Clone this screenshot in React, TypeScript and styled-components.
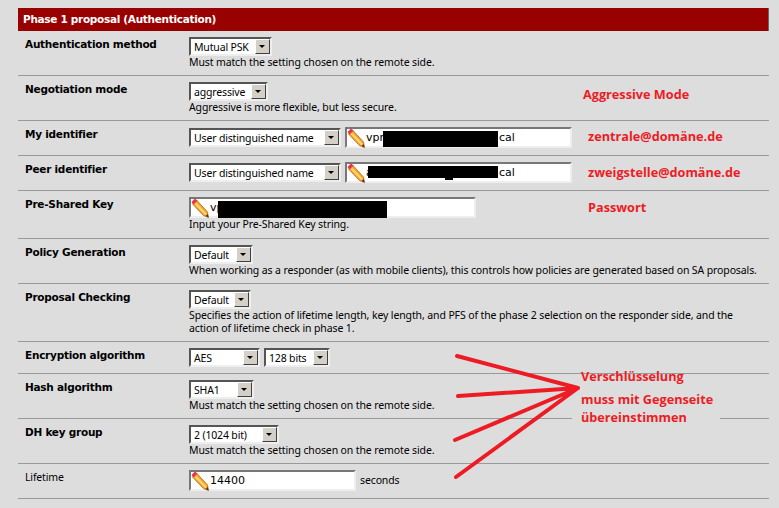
import React from "react";
import styled, { createGlobalStyle } from "styled-components";

const UI_FONT = `"Noto Sans", Tahoma, sans-serif`;
const BOLD_FONT = `"DejaVu Sans", Verdana, sans-serif`;

const GlobalStyle = createGlobalStyle`
  html, body {
    margin: 0;
    padding: 0;
    background: #dddddd;
    overflow: hidden;
  }
`;

const Pencil: React.FC = () => (
  <PencilIcon viewBox="0 0 18 20" aria-hidden="true">
    <path d="M1.5 6 L12.5 17.5 L17.5 19.5 L16.5 14 L5.5 2 Z" fill="#f5a623" stroke="#b5651d" strokeWidth="0.8" />
    <path d="M4.5 5.5 L15 16.5" stroke="#fbd77a" strokeWidth="2" />
    <path d="M0.5 4 L4 0.5 L6.5 2.5 L2.5 6.5 Z" fill="#e8344a" />
    <path d="M14.5 18 L17.5 19.5 L16.8 16 Z" fill="#5a3a1a" />
  </PencilIcon>
);

const Select: React.FC<{ value: string; width: number }> = ({ value, width }) => (
  <SelectBox $width={width}>
    <SelectValue>{value}</SelectValue>
    <SelectArrow />
  </SelectBox>
);

const Field: React.FC<{ width: number; value?: string; children?: React.ReactNode }> = ({ width, value, children }) => (
  <InputBox $width={width}>
    <Pencil />
    <InputValue>{value}</InputValue>
    {children}
  </InputBox>
);

const App: React.FC = () => (
  <Page>
    <GlobalStyle />
    <Panel>
      <Header>Phase 1 proposal (Authentication)</Header>

      <Row>
        <Label>Authentication method</Label>
        <Cell>
          <Select value="Mutual PSK" width={83} />
          <Note>Must match the setting chosen on the remote side.</Note>
        </Cell>
      </Row>
      <Row>
        <Label>Negotiation mode</Label>
        <Cell>
          <Select value="aggressive" width={79} />
          <Note>Aggressive is more flexible, but less secure.</Note>
        </Cell>
      </Row>
      <Row $tall>
        <Label>My identifier</Label>
        <Controls>
          <Select value="User distinguished name" width={152} />
          <Field width={227} value="vpr">
            <Redaction $left={36} $top={2} $width={115} $height={16} />
            <TrailingText>cal</TrailingText>
          </Field>
        </Controls>
      </Row>
      <Row $tall>
        <Label>Peer identifier</Label>
        <Controls>
          <Select value="User distinguished name" width={152} />
          <Field width={227} value="a">
            <Redaction $left={21} $top={2} $width={130} $height={12} />
            <Redaction $left={98} $top={14} $width={8} $height={2} />
            <TrailingText>cal</TrailingText>
          </Field>
        </Controls>
      </Row>
      <Row $tall>
        <Label>Pre-Shared Key</Label>
        <Cell>
          <Field width={287} value="vp">
            <Redaction $left={27} $top={2} $width={169} $height={17} />
          </Field>
          <Note>Input your Pre-Shared Key string.</Note>
        </Cell>
      </Row>
      <Row>
        <Label>Policy Generation</Label>
        <Cell>
          <Select value="Default" width={64} />
          <Note>When working as a responder (as with mobile clients), this controls how policies are generated based on SA proposals.</Note>
        </Cell>
      </Row>
      <Row>
        <Label>Proposal Checking</Label>
        <Cell>
          <Select value="Default" width={62} />
          <Note>Specifies the action of lifetime length, key length, and PFS of the phase 2 selection on the responder side, and the</Note>
          <Note>action of lifetime check in phase 1.</Note>
        </Cell>
      </Row>
      <Row>
        <Label>Encryption algorithm</Label>
        <Controls>
          <Select value="AES" width={71} />
          <Select value="128 bits" width={66} />
        </Controls>
      </Row>
      <Row>
        <Label>Hash algorithm</Label>
        <Cell>
          <Select value="SHA1" width={65} />
          <Note>Must match the setting chosen on the remote side.</Note>
        </Cell>
      </Row>
      <Row>
        <Label>DH key group</Label>
        <Cell>
          <Select value="2 (1024 bit)" width={90} />
          <Note>Must match the setting chosen on the remote side.</Note>
        </Cell>
      </Row>
      <Row $tall>
        <Label $plain>Lifetime</Label>
        <Controls>
          <Field width={167} value="14400" />
          <Note>seconds</Note>
        </Controls>
      </Row>
    </Panel>

    <Arrows viewBox="0 0 779 508" aria-hidden="true">
      <path d="M457 356 L578 388 M458 396 L578 388 M455 440 L578 388 M456 477 L578 388" />
    </Arrows>

    <Annotation $left={583} $top={86}>Aggressive Mode</Annotation>
    <Annotation $left={588} $top={128}>zentrale@domäne.de</Annotation>
    <Annotation $left={588} $top={164}>zweigstelle@domäne.de</Annotation>
    <Annotation $left={588} $top={199}>Passwort</Annotation>
    <Annotation $left={581} $top={368}>Verschlüsselung</Annotation>
    <Annotation $left={581} $top={391}>muss mit Gegenseite</Annotation>
    <Annotation $left={572} $top={409} $masked>übereinstimmen</Annotation>
  </Page>
);

export default App;

const Page = styled.div`
  position: relative;
  width: 779px;
  height: 508px;
  padding: 8px 10px 0 18px;
  box-sizing: border-box;
  background: #dddddd;
  color: #000000;
  font-family: ${UI_FONT};
  font-size: 10.5px;
  overflow: hidden;
`;

const Panel = styled.div`
  display: flex;
  flex-direction: column;
`;

const Header = styled.div`
  height: 23px;
  line-height: 23px;
  padding-left: 5px;
  background: #990000;
  border-right: 1px solid #666666;
  color: #ffffff;
  font-family: ${BOLD_FONT};
  font-weight: bold;
  font-size: 10.5px;
  letter-spacing: -0.3px;
`;

const Row = styled.div<{ $tall?: boolean }>`
  display: grid;
  grid-template-columns: 171px 1fr;
  padding: 6px 0 ${(p) => (p.$tall ? 7 : 6)}px;
  border-bottom: 1px solid #999999;
`;

const Label = styled.div<{ $plain?: boolean }>`
  padding-left: 7px;
  line-height: 14px;
  font-family: ${(p) => (p.$plain ? UI_FONT : BOLD_FONT)};
  font-weight: ${(p) => (p.$plain ? "normal" : "bold")};
  font-size: 10.5px;
  letter-spacing: ${(p) => (p.$plain ? -0.16 : -0.25)}px;
`;

const Cell = styled.div`
  display: flex;
  flex-direction: column;
  align-items: flex-start;
`;

const Controls = styled.div`
  display: flex;
  align-items: center;
  gap: 4px;
`;

const Note = styled.div`
  line-height: 13px;
  font-size: 10.5px;
  letter-spacing: -0.12px;
  white-space: nowrap;
`;

const SelectBox = styled.div<{ $width: number }>`
  display: flex;
  align-items: center;
  justify-content: space-between;
  width: ${(p) => p.$width}px;
  height: 19px;
  box-sizing: border-box;
  background: #ffffff;
  border: 2px solid;
  border-color: #555555 #eeeeee #eeeeee #555555;
`;

const SelectValue = styled.span`
  padding-left: 3px;
  font-size: 10.5px;
  letter-spacing: -0.16px;
  white-space: nowrap;
`;

const SelectArrow = styled.span`
  position: relative;
  flex: none;
  width: 15px;
  height: 15px;
  box-sizing: border-box;
  background: #d4d0c8;
  border: 1px solid;
  border-color: #ffffff #404040 #404040 #ffffff;

  &::after {
    content: "";
    position: absolute;
    left: 3px;
    top: 5px;
    border-style: solid;
    border-width: 3px 3px 0;
    border-color: #000000 transparent transparent;
  }
`;

const InputBox = styled.div<{ $width: number }>`
  position: relative;
  display: flex;
  align-items: center;
  width: ${(p) => p.$width}px;
  height: 21px;
  box-sizing: border-box;
  background: #ffffff;
  border: 2px solid;
  border-color: #777777 #eeeeee #eeeeee #777777;
`;

const PencilIcon = styled.svg`
  flex: none;
  width: 18px;
  height: 20px;
`;

const InputValue = styled.span`
  padding-left: 1px;
  font-family: ${BOLD_FONT};
  font-size: 11px;
`;

const TrailingText = styled.span`
  position: absolute;
  left: 152px;
  top: 0;
  font-family: ${BOLD_FONT};
  font-size: 11px;
  line-height: 17px;
`;

const Redaction = styled.div<{ $left: number; $top: number; $width: number; $height: number }>`
  position: absolute;
  left: ${(p) => p.$left}px;
  top: ${(p) => p.$top}px;
  width: ${(p) => p.$width}px;
  height: ${(p) => p.$height}px;
  background: #000000;
`;

const Arrows = styled.svg`
  position: absolute;
  left: 0;
  top: 0;
  width: 779px;
  height: 508px;
  fill: none;
  stroke: #ed1c24;
  stroke-width: 4;
  stroke-linecap: round;
`;

const Annotation = styled.div<{ $left: number; $top: number; $masked?: boolean }>`
  position: absolute;
  left: ${(p) => p.$left}px;
  top: ${(p) => p.$top}px;
  padding: ${(p) => (p.$masked ? "0 33px 0 9px" : "0")};
  background: ${(p) => (p.$masked ? "#dddddd" : "transparent")};
  color: #ed1c24;
  font-family: "Open Sans", sans-serif;
  font-size: 12.7px;
  line-height: 16px;
  font-weight: 700;
  white-space: nowrap;
`;
